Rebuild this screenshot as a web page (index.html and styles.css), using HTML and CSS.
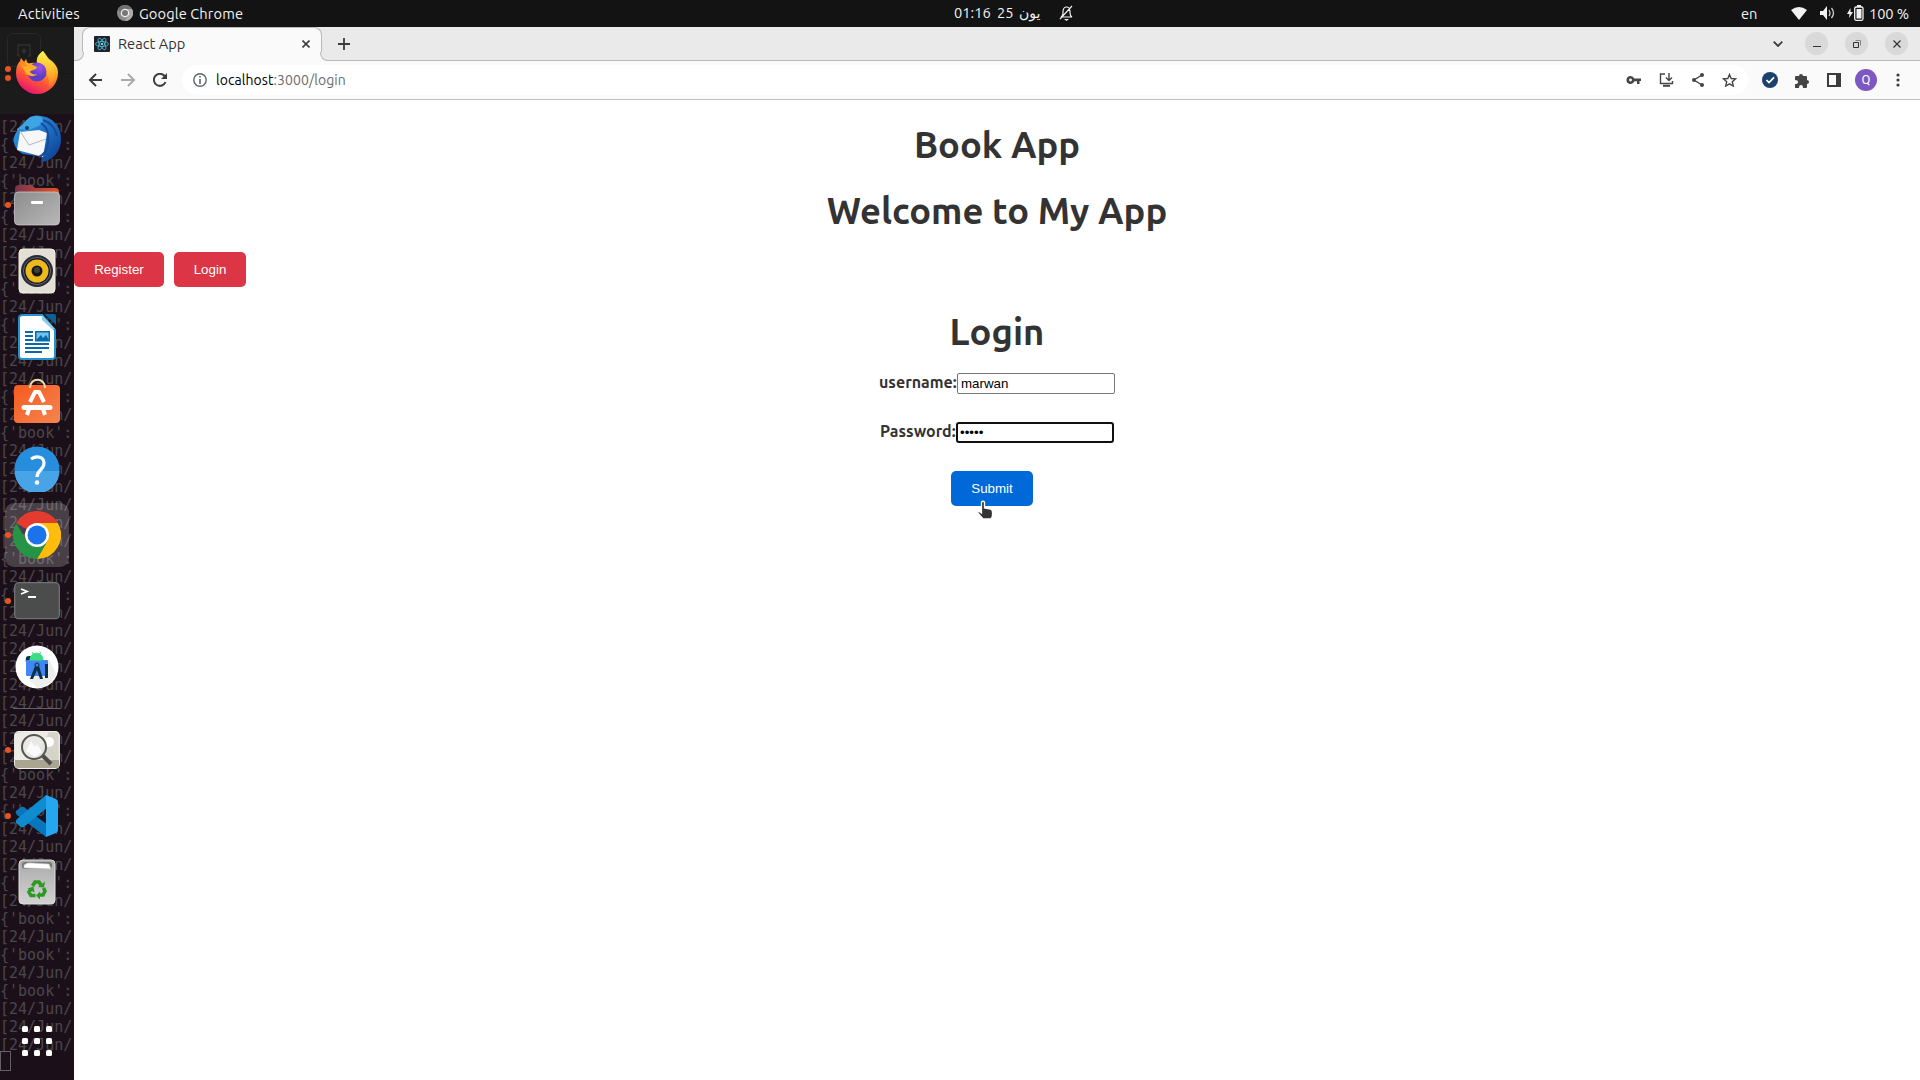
FILE: index.html
```html
<!DOCTYPE html>
<html lang="en">
<head>
<meta charset="utf-8">
<title>React App</title>
<link rel="stylesheet" href="styles.css">
</head>
<body>
<header class="topbar">
  <span class="activities">Activities</span>
  <svg class="app-icon" width="16" height="16" viewBox="0 0 16 16"><circle cx="8" cy="8" r="8" fill="#8b8b8b"/><path d="M8 4h7A8 8 0 0 1 8 16l4-7z" fill="#aaa"/><path d="M1 4a8 8 0 0 1 14 0H8L4 9z" fill="#717171"/><circle cx="8" cy="8" r="4.3" fill="#eee"/><circle cx="8" cy="8" r="3" fill="#777"/></svg>
  <span class="app-name">Google Chrome</span>
  <div class="clock"><span class="time">01:16</span><span class="day">25</span><span class="month" lang="ar">يون</span>
    <svg width="14" height="16" viewBox="0 0 14 16" fill="none" stroke="#eee" stroke-width="1.2"><path d="M2 12h11q-2-1-2-4V6Q10.500 2 7.500 2T4 6v2q0 3-2 4zM1 14 13 1"/><path d="M5 14h5l-2.500 2z" fill="#eee" stroke="none"/></svg>
  </div>
  <div class="system"><span class="lang">en</span>
    <svg class="wifi" width="16" height="13" viewBox="0 0 16 13"><path d="M0 3Q8-3 16 3L8 13z" fill="#f2f2f2"/></svg>
    <svg class="volume" width="16" height="14" viewBox="0 0 16 14"><path d="M0 5h3l4-5v14l-4-5H0z" fill="#f2f2f2"/><path d="M9 4q2 3 0 6M11.500 2q4 5 0 10" fill="none" stroke="#ccc" stroke-width="1.300"/></svg>
    <svg class="battery" width="17" height="16" viewBox="0 0 17 16"><path d="M3.500 3 0 9h2.500L2 13l4-6H3.500z" fill="#f2f2f2"/><rect x="7.700" y="2" width="8.300" height="13.300" rx="1.500" fill="none" stroke="#f2f2f2" stroke-width="1.300"/><path d="M10 0h4v2h-4zM9.500 4h5v9.500h-5z" fill="#f2f2f2"/></svg>
    <span class="percent">100 %</span>
  </div>
</header>
<div class="desktop">
<aside class="dock">
  <div class="terminal-head"><svg width="34" height="34" viewBox="0 0 34 34" fill="none" stroke="#292929"><rect x=".5" y=".5" width="33" height="33" rx="5"/><path d="M13 23h-2V12h12v11h-2M17 15v6M14 18h6" stroke="#3a3a3a"/></svg></div>
  <pre class="terminal-log">[24/Jun/
{'book':
[24/Jun/
{'book':
[24/Jun/
{'book':
[24/Jun/
[24/Jun/
[24/Jun/
{'book':
[24/Jun/
{'book':
[24/Jun/
[24/Jun/
[24/Jun/
{'book':
[24/Jun/
{'book':
[24/Jun/
[24/Jun/
[24/Jun/
[24/Jun/
[24/Jun/
[24/Jun/
{'book':
[24/Jun/
{'book':
[24/Jun/
[24/Jun/
[24/Jun/
[24/Jun/
[24/Jun/
[24/Jun/
[24/Jun/
[24/Jun/
[24/Jun/
{'book':
[24/Jun/
{'book':
[24/Jun/
[24/Jun/
[24/Jun/
{'book':
[24/Jun/
{'book':
[24/Jun/
{'book':
[24/Jun/
{'book':
[24/Jun/
[24/Jun/
[24/Jun/</pre>
  <div class="terminal-cursor"></div>
  <nav class="launchers">
    <div class="launcher running twice firefox"><svg width="44" height="44" viewBox="2 1 44 44"><defs><linearGradient id="ff" x1=".8" y1="0" x2=".3" y2="1"><stop offset="0" stop-color="#fff44f"/><stop offset=".35" stop-color="#ffa61e"/><stop offset=".7" stop-color="#ff4f38"/><stop offset="1" stop-color="#e3107a"/></linearGradient><linearGradient id="fy" x1="0" y1="0" x2="0" y2="1"><stop offset="0" stop-color="#fff44f"/><stop offset="1" stop-color="#ff9a20" stop-opacity=".4"/></linearGradient><radialGradient id="fp" cx=".65" cy=".25"><stop offset="0" stop-color="#a14fe9"/><stop offset="1" stop-color="#5a3ec8"/></radialGradient></defs><path d="M30 2c3 3 4 6 6 8l3 2c4 4 6 7 6 12a21 21 0 0 1-42 0c0-5 1-9 4-12l1-3 3 4 2-3 2 5q4-2 9-1-1-7 6-12z" fill="url(#ff)"/><path d="M30 2c2 5 5 7 8 11 6 7 5 19-2 25 1-9-3-18-12-23-1-6 1-9 6-13z" fill="url(#fy)"/><circle cx="24" cy="23" r="9.500" fill="url(#fp)"/><path d="M7 15c6-3 11 0 17 3 0 3-6 3-7 5 2 2 4 3 7 2-3 4-10 2-12-2-1-3-3-5-5-8z" fill="#ffae25"/><path d="M9 11l-2 7 8-1z" fill="#ff8b24"/></svg></div>
    <div class="launcher"><svg width="50" height="50" viewBox="0 0 50 50"><defs><linearGradient id="tb" x1="0" y1="0" x2="1" y2="1"><stop offset="0" stop-color="#37a6e4"/><stop offset=".5" stop-color="#1e72c8"/><stop offset="1" stop-color="#0c3786"/></linearGradient></defs><path d="M22 2c14-2 27 7 27 23 0 12-8 22-20 23l2-5-20-3C4 36 1 31 2 23q2-6 6-8L18 3z" fill="url(#tb)"/><path d="M8 18 27 16l8 3-4 24L5 36z" fill="#f7f7fa"/><path d="m8 17 9 14 17-6" fill="none" stroke="#b5b6bc"/><path d="M5 15C13 10 13 4 22 2c5-1 9 2 9 5-2 5-7 6-12 8l-5 2c-2-3-5-3-9 0z" fill="#3da6e2"/><path d="M31 6c6 2 12 7 14 16M29 9c6 4 8 9 7 21-1 7-5 11-9 13" fill="none" stroke="#174b99" stroke-width="2"/><circle cx="15" cy="14" r="2" fill="#173b66"/></svg></div>
    <div class="launcher running"><svg width="46" height="42" viewBox="0 0 46 42"><defs><linearGradient id="fo"><stop offset="0" stop-color="#78334e"/><stop offset="1" stop-color="#e35527"/></linearGradient><linearGradient id="fg" x2="1" y2="1"><stop offset="0" stop-color="#8c8c8c"/><stop offset="1" stop-color="#b8b8b8"/></linearGradient></defs><path d="M1 5q0-4 4-4h13l3 3h20q4 0 4 4v14H1z" fill="url(#fo)"/><rect x=".5" y="8" width="45" height="33" rx="4" fill="url(#fg)" stroke="#d2d2d2" stroke-width=".7"/><rect x="17" y="17" width="12" height="3" rx="1" fill="#fff"/></svg></div>
    <div class="launcher"><svg width="38" height="46" viewBox="0 0 38 46"><rect x="1" y="1" width="36" height="44" rx="4" fill="#e3dfd4" stroke="#f5f1e7"/><circle cx="19" cy="23" r="16" fill="#292b35"/><circle cx="19" cy="23" r="13.500" fill="#111721" stroke="#646979"/><circle cx="19" cy="23" r="11.500" fill="#eeb91d"/><circle cx="19" cy="23" r="5.500" fill="#151515"/><circle cx="19" cy="22" r="3" fill="#3f3f3f"/></svg></div>
    <div class="launcher"><svg width="38" height="46" viewBox="0 0 38 46"><path d="M5 1h19l13 15v26q0 3-3 3H4q-3 0-3-3V4q0-3 4-3z" fill="#fff" stroke="#2492cf" stroke-width="2"/><path d="M26 0h10q2 0 2 2v9z" fill="#096198"/><path d="M24 1v5l10 9h3z" fill="#8bcfeb"/><path d="M7 18h8M7 22h8M7 26h8M7 30h24M7 34h24M7 38h17" stroke="#086aa8" stroke-width="2"/><rect x="17.750" y="17.750" width="13.500" height="9" fill="#72c4ec" stroke="#086aa8" stroke-width="1.500"/><path d="m18 26 5-5 2 3 3-3 3 5z" fill="#086aa8"/></svg></div>
    <div class="launcher software"><svg width="46" height="46" viewBox="0 0 46 46"><defs><linearGradient id="so" x2="1" y2="1"><stop offset="0" stop-color="#f45b20"/><stop offset="1" stop-color="#f68450"/></linearGradient></defs><rect y="7" width="46" height="38" rx="4" fill="url(#so)"/><path d="M16 10c0-11 15-11 15 0" fill="none" stroke="#f4d7aa" stroke-width="2"/><path d="m16 24 5-10h4l5 10M15 31l-2 6M31 37l-2-6" fill="none" stroke="#fff" stroke-width="4" stroke-linejoin="round"/><path d="M10 29.500h26" fill="none" stroke="#fff" stroke-width="5" stroke-linecap="round"/></svg></div>
    <div class="launcher help"><svg width="46" height="46" viewBox="0 0 46 46"><circle cx="23" cy="23" r="22.500" fill="#278ddd"/><path d="M.5 25a22.500 22.500 0 0 0 45 0z" fill="#48a4e7"/><path d="M17 13c6-4 13-2 13 4 0 7-7 7-7 14" fill="none" stroke="#fff" stroke-width="3.200"/><circle cx="23" cy="36.500" r="2.300" fill="#fff"/></svg></div>
    <div class="launcher running active"><svg width="48" height="48" viewBox="0 0 48 48"><path d="M24 24 3.200 12A24 24 0 0 1 44.800 12z" fill="#e33b2e"/><path d="M24 12h20.800A24 24 0 0 1 24 48l10.400-18z" fill="#fdbd0a"/><path d="M13.600 30 3.200 12A24 24 0 0 0 24 48l10.400-18z" fill="#269447"/><circle cx="24" cy="24" r="12" fill="#fff"/><circle cx="24" cy="24" r="9.500" fill="#1a73e8"/></svg></div>
    <div class="launcher running"><svg width="46" height="38" viewBox="0 0 46 38"><rect x=".7" y=".7" width="44.600" height="36" rx="4" fill="#4b4d4c" stroke="#727272" stroke-width="1.300"/><path d="m7 7 6 2.500L7 12M14 15h8" fill="none" stroke="#fff" stroke-width="1.800"/></svg></div>
    <div class="launcher"><svg width="44" height="44" viewBox="0 0 44 44"><circle cx="22" cy="22" r="21.500" fill="#fff"/><path d="m34 14 7 15q-6 13-19 14l-9-10z" fill="#eee"/><path d="M11 13q0-2 3-2h5v8h-7q-2-2-1-6z" fill="#073042"/><rect x="11" y="15" width="22" height="16" rx="1" fill="#4285f4"/><path d="M15 15c0-9 13-9 13 0zM17 7l2 3M26 7l-2 3" fill="#3ddc84" stroke="#3ddc84"/><path d="M30 19h3v14h-3zM20 21h4l4 13h-3l-3-9-4 9h-3zM17 28h10" fill="#073042"/><circle cx="22" cy="20" r="2" fill="#4285f4" stroke="#073042"/></svg></div>
    <div class="divider"></div>
    <div class="launcher running"><svg width="46" height="38" viewBox="0 0 46 38"><rect x=".7" y=".7" width="44.600" height="36.600" rx="4" fill="#d6d4c9" stroke="#efeee8" stroke-width="1.300"/><path d="M1 3 10 1h25L20 29H1z" fill="#eeede5"/><path d="M1 29h44v5q0 3-3 3H4q-3 0-3-3z" fill="#aaa591"/><circle cx="35" cy="11" r="5" fill="#fff"/><circle cx="20" cy="16" r="12" fill="#e6e7e3" fill-opacity=".8" stroke="#555" stroke-width="2"/><path d="m12 20 5-10 4 6 2-3 5 8-7 5z" fill="#fafafa"/><path d="m29 25 8 8" stroke="#4c4c4c" stroke-width="4"/></svg></div>
    <div class="launcher running"><svg width="44" height="44" viewBox="0 0 44 44"><path d="M6 13 1 17q-1 2 1 4l29 22 2-12-23-17q-2-2-4-1z" fill="#0876bd"/><path d="m6 33-5-4q-1-2 1-4L31 1l2 12L10 32q-2 2-4 1z" fill="#0f8bd0"/><path d="m31 1 10 4q2 1 2 3v28q0 2-2 3l-10 4z" fill="#25a7f0"/></svg></div>
    <div class="launcher"><svg width="38" height="46" viewBox="0 0 38 46"><defs><linearGradient id="tr" x2="0" y2="1"><stop stop-color="#aaa"/><stop offset="1" stop-color="#d2d2d2"/></linearGradient></defs><rect x="1" y="1" width="36" height="44" rx="4" fill="url(#tr)" stroke="#ddd"/><rect x="4" y="3" width="30" height="7" rx="3" fill="#777"/><path d="M6 9V6q3-3 9-2l16 1 2 5z" fill="#fff" stroke="#bbb" stroke-width=".6"/><g fill="none" stroke="#2b9a22" stroke-width="3.600"><path d="m14.500 27 2.500-4h4l2 3M25.500 29l1.500 3-2 4h-4M17.500 36.500H13L11 33l2-3"/></g><path d="m20 28 6 .500 1-6zM22 32.500v8l-4-4zM9.500 29.500l6-2 1 6z" fill="#2b9a22"/></svg></div>
  </nav>
  <div class="apps"><i></i><i></i><i></i><i></i><i></i><i></i><i></i><i></i><i></i></div>
</aside>
<section class="browser">
  <div class="tabs">
    <div class="tab">
      <svg class="favicon" width="16" height="16" viewBox="0 0 16 16"><rect width="16" height="16" rx="1" fill="#20232a"/><g fill="none" stroke="#52bfd9" stroke-width=".8"><ellipse cx="8" cy="8" rx="6.500" ry="2.500"/><ellipse cx="8" cy="8" rx="6.500" ry="2.500" transform="rotate(60 8 8)"/><ellipse cx="8" cy="8" rx="6.500" ry="2.500" transform="rotate(120 8 8)"/></g><circle cx="8" cy="8" r="1.200" fill="#61dafb"/></svg>
      <span class="tab-title">React App</span>
      <svg width="8" height="8" viewBox="0 0 8 8"><path d="m.5.5 7 7m0-7-7 7" stroke="#3c3c3c" stroke-width="1.600"/></svg>
    </div>
    <svg class="new-tab" width="12" height="12" viewBox="0 0 12 12"><path d="M6 0v12M0 6h12" stroke="#3c3c3c" stroke-width="1.800"/></svg>
    <div class="window-controls">
      <svg class="chevron" width="10" height="6" viewBox="0 0 10 6"><path d="m.7.700 4.300 4.300L9.300.700" fill="none" stroke="#3c3c3c" stroke-width="1.800"/></svg>
      <span class="control"><svg width="10" height="10" viewBox="0 0 10 10"><path d="M1 7.500h8" stroke="#333"/></svg></span>
      <span class="control"><svg width="10" height="10" viewBox="0 0 10 10" fill="none" stroke="#333"><path d="M1.500 3.500h5v5h-5z"/><path d="M3.500 1.500h5v5" stroke="#888"/></svg></span>
      <span class="control"><svg width="10" height="10" viewBox="0 0 10 10"><path d="m1.500 1.500 7 7m0-7-7 7" stroke="#333" stroke-width="1.200"/></svg></span>
    </div>
  </div>
  <div class="toolbar">
    <svg class="back" width="15" height="14" viewBox="0 0 15 14" fill="none" stroke="#3c3c3c" stroke-width="2"><path d="M14 7H2M8 1 2 7l6 6"/></svg>
    <svg class="forward" width="15" height="14" viewBox="0 0 15 14" fill="none" stroke="#aaa" stroke-width="2"><path d="M0 7h13M7 1l6 6-6 6"/></svg>
    <svg class="reload" width="15" height="14" viewBox="0 0 15 14"><path d="M12.500 9A6 6 0 1 1 11.500 3" fill="none" stroke="#3c3c3c" stroke-width="2"/><path d="M14 0v6H8z" fill="#3c3c3c"/></svg>
    <div class="address">
      <svg width="14" height="14" viewBox="0 0 14 14"><circle cx="7" cy="7" r="6.200" fill="none" stroke="#5f6368" stroke-width="1.400"/><path d="M7 6v5M7 3v1.600" stroke="#5f6368" stroke-width="1.600"/></svg>
      <span class="url">localhost<span class="path">:3000/login</span></span>
      <div class="address-actions">
        <svg width="15" height="10" viewBox="0 0 15 10"><path d="M4.500 1a4 4 0 1 0 3.800 5.200H11V9h2.500V6H15V3.500H8.300A4 4 0 0 0 4.500 1zm0 2.600a1.400 1.400 0 1 1 0 2.800 1.400 1.400 0 0 1 0-2.800z" fill="#454545"/></svg>
        <svg width="15" height="14" viewBox="0 0 15 14" fill="none" stroke="#454545" stroke-width="1.400"><path d="M6 1H1.500v9.500h12V8M10 0v7M7 4.500l3 3 3-3"/><path d="M4 12.800h7" stroke-width="2"/></svg>
        <svg width="12" height="14" viewBox="0 0 12 14"><path d="M10 2 2 7l8 5" fill="none" stroke="#454545" stroke-width="1.400"/><g fill="#454545"><circle cx="10" cy="2" r="2"/><circle cx="2" cy="7" r="2"/><circle cx="10" cy="12" r="2"/></g></svg>
        <svg width="15" height="14" viewBox="0 0 15 14"><path d="m7.500 1.500 1.700 4 4.400.400-3.300 2.900 1 4.200-3.800-2.200L3.700 13l1-4.200-3.300-2.900 4.400-.400z" fill="none" stroke="#454545" stroke-width="1.400"/></svg>
      </div>
    </div>
    <div class="extensions">
      <svg width="16" height="16" viewBox="0 0 16 16"><circle cx="8" cy="8" r="8" fill="#1b416c"/><path d="m4.500 8 2.500 2.600 5-5.200" fill="none" stroke="#fff" stroke-width="1.700"/></svg>
      <svg class="puzzle" width="15" height="15" viewBox="0 0 15 15"><path d="M1 4q0-1 1-1h3a2 2 0 1 1 4 0h3q1 0 1 1v3a2 2 0 1 1 0 4v3q0 1-1 1H9q0-3-2-3t-2 3H1v-4q3 0 3-2T1 7z" fill="#454545"/></svg>
      <svg class="panel" width="14" height="14" viewBox="0 0 14 14"><path d="M0 0h14v14H0zm2 2v10h7V2z" fill="#3c3c3c" fill-rule="evenodd"/></svg>
      <span class="avatar">Q</span>
      <svg class="more" width="4" height="14" viewBox="0 0 4 14" fill="#3c3c3c"><circle cx="2" cy="2" r="1.600"/><circle cx="2" cy="7" r="1.600"/><circle cx="2" cy="12" r="1.600"/></svg>
    </div>
  </div>
  <main class="page">
    <h1 class="brand">Book App</h1>
    <h1 class="welcome">Welcome to My App</h1>
    <div class="links"><button class="button danger register">Register</button><button class="button danger login">Login</button></div>
    <h1 class="form-title">Login</h1>
    <form class="form">
      <div class="field"><label class="label-user" for="user">username:</label><input class="input" id="user" type="text" value="marwan"></div>
      <div class="field password"><label class="label-pass" for="pass">Password:</label><input class="input focused" id="pass" type="password" value="12345"></div>
      <div class="submit-row"><button class="button primary" type="button">Submit</button>
      <svg class="pointer" width="18" height="20" viewBox="0 0 18 20"><path d="M5.500 2q1.500-1.500 3 0v6l6 1q2 1 2 3v3q0 3-2 4H7L1 12q2-1 4.500 1z" fill="#333" stroke="#fff" stroke-width="1.300"/></svg></div>
    </form>
  </main>
</section>
</div>
</body>
</html>
```
FILE: styles.css
```css
* { box-sizing: border-box; }
body { margin: 0; width: 1920px; height: 1080px; overflow: hidden; background: #fff; font-family: Ubuntu, "Noto Sans", sans-serif; color: #333; }
svg { display: block; flex: none; }
.topbar { height: 27px; display: grid; grid-template-columns: 99px 16px 821px auto 1fr; padding: 0 13px 1px 18px; align-items: center; background: #131313; color: #f2f2f2; font-size: 14.667px; white-space: nowrap; }
.activities { letter-spacing: .18px; }
.app-name { padding-left: 6px; letter-spacing: .1px; }
.clock { display: flex; align-items: center; height: 26px; line-height: 26px; }
.time { width: 43px; }
.day { width: 22px; }
.month { width: 40px; font-family: "DejaVu Sans", sans-serif; font-size: 14px; }
.system { display: flex; align-items: center; justify-content: flex-end; }
.lang { width: 50px; }
.volume { margin-left: 13px; }
.battery { margin-left: 11px; }
.percent { width: 38px; margin-left: 5px; letter-spacing: -.1px; }
.desktop { display: grid; grid-template-columns: 74px 1fr; height: 1053px; }
.dock { position: relative; overflow: hidden; background: #1b101a; display: flex; flex-direction: column; }
.terminal-head { position: absolute; top: 0; left: 0; width: 74px; height: 87px; padding: 6px 0 0 7px; background: linear-gradient(#1b1b1b 46px, #171717 46px, #171717 47px, #1b1b1b 47px); }
.terminal-log { position: absolute; top: 91px; left: 0; margin: 0; font: 15px/18px "DejaVu Sans Mono", monospace; color: #4b474b; }
.terminal-cursor { position: absolute; left: 0; top: 1024px; width: 11px; height: 20px; border: 1px solid #655e64; }
.launchers { position: relative; padding-top: 13px; }
.launcher { position: relative; height: 66px; display: flex; align-items: center; justify-content: center; }
.firefox svg { margin-top: -3px; }
.software svg { margin-top: -5px; }
.running::before { content: ""; position: absolute; left: 5px; top: 30px; width: 6px; height: 6px; border-radius: 50%; background: #e95420; }
.twice::before { top: 26px; box-shadow: 0 9px #e95420; }
.active { isolation: isolate; }
.active::after { content: ""; position: absolute; z-index: -1; left: 5px; top: 1px; width: 64px; height: 64px; border-radius: 9px; background: rgba(255, 255, 255, .2); }
.divider { width: 48px; height: 1px; margin: 8px auto; background: #655e64; }
.apps { position: relative; margin: auto auto 24px; display: grid; grid-template-columns: repeat(3, 6px); gap: 6px; }
.apps i { width: 6px; height: 6px; border-radius: 1.5px; background: #fff; }
.browser { min-width: 0; background: #fff; }
.tabs { height: 34px; display: flex; align-items: center; padding: 0 12px 0 8px; background: #eaeaea; border-bottom: 1px solid #b9b9b9; }
.tab { position: relative; width: 240px; height: 34px; margin-bottom: -1px; display: flex; align-items: center; padding: 0 11px 1px; background: #fafafa; border: 1px solid #b9b9b9; border-bottom: 0; border-radius: 8px 8px 0 0; font-size: 14.667px; line-height: 18px; }
.tab::before, .tab::after { content: ""; position: absolute; bottom: 0; width: 8px; height: 8px; border: solid #b9b9b9; background: #eaeaea; }
.tab::before { left: -8px; border-width: 0 1px 1px 0; border-radius: 0 0 8px 0; box-shadow: 3px 3px 0 #fafafa; clip-path: inset(0 -1px 0 0); }
.tab::after { right: -8px; border-width: 0 0 1px 1px; border-radius: 0 0 0 8px; box-shadow: -3px 3px 0 #fafafa; clip-path: inset(0 0 0 -1px); }
.tab-title { flex: 1; margin-left: 8px; }
.new-tab { margin-left: 16px; }
.window-controls { margin-left: auto; display: flex; align-items: center; gap: 17px; }
.chevron { margin-right: 5px; }
.control { width: 23px; height: 23px; border-radius: 50%; background: #d9d9d9; display: grid; place-items: center; }
.toolbar { height: 39px; display: flex; align-items: center; padding: 0 20px 0 14px; background: #fafafa; border-bottom: 1px solid #c0c0c0; }
.forward { margin-left: 18px; }
.reload { margin-left: 17px; }
.address { width: 1566px; height: 30px; margin-left: 14px; display: flex; align-items: center; padding: 0 11px; border-radius: 15px; background: #fff; font-size: 14px; }
.url { margin-left: 9px; color: #000; letter-spacing: .07px; }
.path { color: #6b6b6b; }
.address-actions { margin-left: auto; display: flex; align-items: center; gap: 18px; }
.extensions { margin-left: auto; display: flex; align-items: center; }
.puzzle { margin-left: 16px; }
.panel { margin-left: 18px; }
.avatar { width: 22px; height: 22px; margin-left: 14px; border-radius: 50%; background: #7e57c2; color: #fff; font: 13px/22px Roboto, sans-serif; text-align: center; }
.more { margin-left: 19px; }
.page { padding-top: 20px; }
h1 { margin: 0; text-align: center; font-size: 36.4px; line-height: 50px; font-weight: 700; white-space: nowrap; }
.welcome { margin-top: 16px; }
.links { display: flex; gap: 10px; margin-top: 16px; }
.button { height: 35px; padding: 0; border: 0; border-radius: 5px; color: #fff; font: 13.333px "Liberation Sans", sans-serif; }
.danger { background: #dc3545; }
.register { width: 90px; }
.login { width: 72px; }
.form-title { margin-top: 20px; }
.form { display: flex; flex-direction: column; align-items: center; margin-top: 16px; }
.field { height: 21px; display: flex; align-items: center; justify-content: flex-end; font-weight: 700; font-size: 16px; }
.field label { line-height: 19px; padding-bottom: 2px; white-space: nowrap; }
.label-user { width: 78px; }
.label-pass { width: 76px; }
.password { margin-top: 28px; }
.input { width: 158px; height: 21px; padding: 1px 3px; border: 1px solid #767676; border-radius: 2px; color: #000; background: #fff; font: 13.333px "Liberation Sans", sans-serif; outline: 0; }
.focused { border: 2px solid #101010; border-radius: 3px; padding: 0 2px; }
.submit-row { position: relative; margin: 28px 10px 0 0; }
.primary { width: 82px; background: #0069d9; }
.pointer { position: absolute; left: 25px; top: 29px; }
```
